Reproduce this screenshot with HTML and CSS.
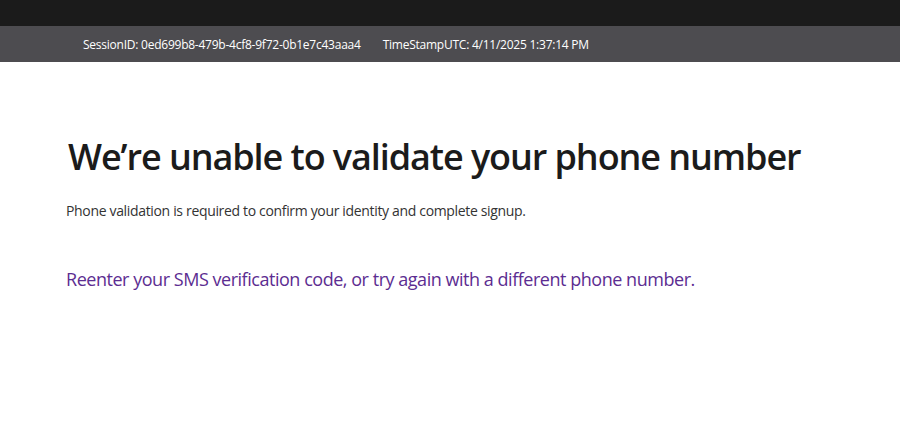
FILE: index.html
```html
<!DOCTYPE html>
<html lang="en">
<head>
    <meta charset="UTF-8" />
    <title>Phone validation</title>
    <meta name="viewport" content="width=device-width, initial-scale=1.0" />
    <link rel="stylesheet" href="styles.css">
</head>
<body>
    <div class="topbar"></div>
    <div class="session">
        <span>SessionID: 0ed699b8-479b-4cf8-9f72-0b1e7c43aaa4</span>
        <span>TimeStampUTC: 4/11/2025 1:37:14 PM</span>
    </div>
    <main class="content">
        <h1>We’re unable to validate your phone number</h1>
        <p class="intro">Phone validation is required to confirm your identity and complete signup.</p>
        <p class="retry">Reenter your SMS verification code, or try again with a different phone number.</p>
    </main>
</body>
</html>
```

FILE: styles.css
```css
body {
    margin: 0;
    font-family: "Open Sans", "Noto Sans", sans-serif;
    background: #fff;
}

.topbar {
    height: 26px;
    background: #1b1b1b;
}

.session {
    height: 36px;
    background: #4d4c50;
    color: #fff;
    font-size: 12px;
    letter-spacing: -0.02em;
    display: flex;
    align-items: center;
    gap: 22px;
    padding-left: 83px;
}

.content {
    padding-left: 66px;
    padding-top: 70px;
}

.content h1 {
    margin: 0 0 0 2px;
    font-size: 36px;
    font-weight: 600;
    letter-spacing: -0.03em;
    color: #1b1b1b;
}

.intro {
    margin: 20px 0 0;
    font-size: 14px;
    letter-spacing: -0.024em;
    color: #333;
}

.retry {
    margin: 47px 0 0;
    font-size: 18px;
    letter-spacing: -0.026em;
    color: #5c2d91;
}
```
